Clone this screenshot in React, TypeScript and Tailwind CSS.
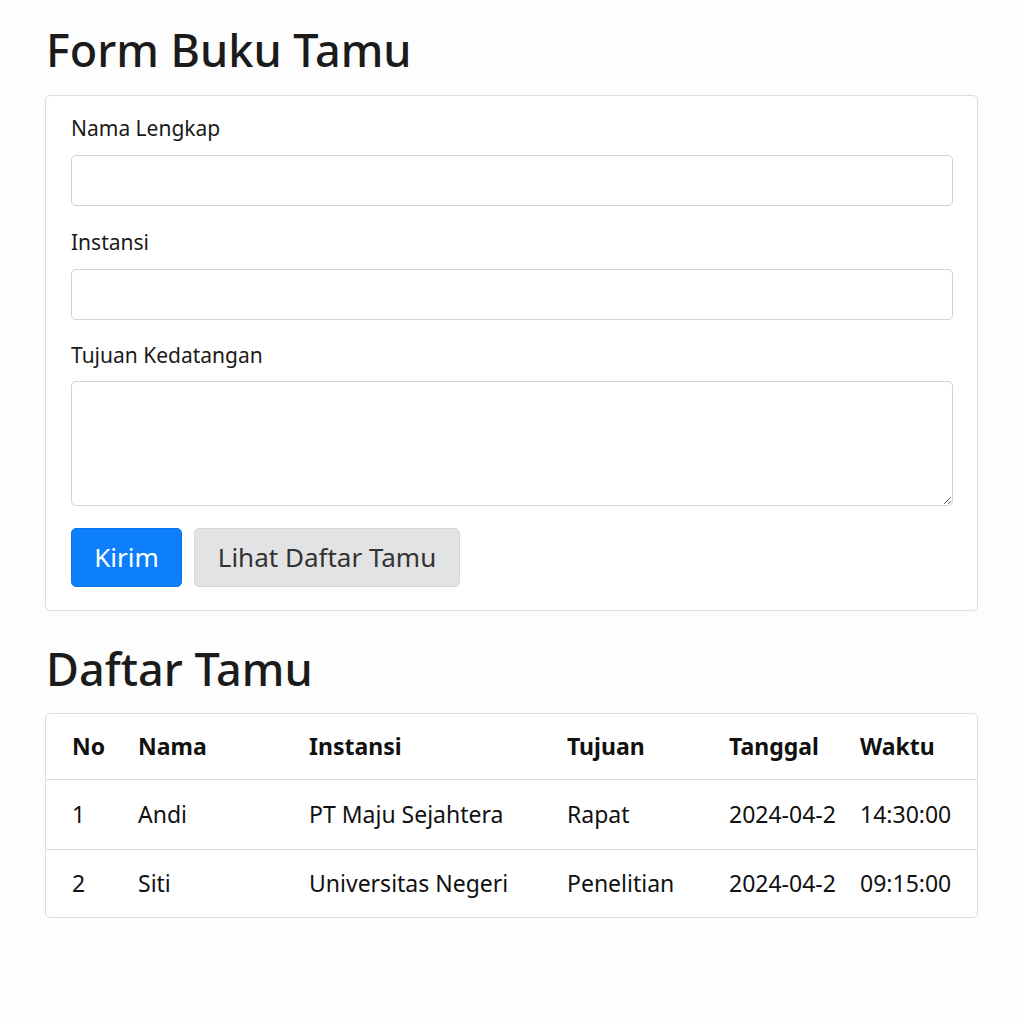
import React from "react";

const rows = [
  { no: "1", nama: "Andi", instansi: "PT Maju Sejahtera", tujuan: "Rapat", tanggal: "2024-04-2", waktu: "14:30:00" },
  { no: "2", nama: "Siti", instansi: "Universitas Negeri", tujuan: "Penelitian", tanggal: "2024-04-2", waktu: "09:15:00" },
];

const gridCols = "grid grid-cols-[66px_171px_258px_162px_131px_1fr] pl-[26px] items-center";

export default function App() {
  return (
    <div
      className="min-h-[1024px] bg-[#fdfdfd] text-[#212529]"
      style={{ fontFamily: '"Noto Sans", "Open Sans", sans-serif' }}
    >
      <div className="pl-[45px] pr-[46px] pt-[22px]">
        <h1 className="text-[45px] leading-[56px] font-medium text-[#1b1b1b] pl-[1px]">Form Buku Tamu</h1>
        <div className="mt-[17px] border border-[#dadde1] rounded-[5px] bg-white pl-[25px] pr-[24px] pt-[18px] pb-[23px]">
          <label className="block text-[21px] leading-[28px] text-[#1a1a1a]">Nama Lengkap</label>
          <input className="mt-[13px] block w-full h-[51px] border border-[#ced4da] rounded-[5px] bg-white" />
          <label className="block mt-[22px] text-[21px] leading-[28px] text-[#1a1a1a]">Instansi</label>
          <input className="mt-[13px] block w-full h-[51px] border border-[#ced4da] rounded-[5px] bg-white" />
          <label className="block mt-[21px] text-[21px] leading-[28px] text-[#1a1a1a]">Tujuan Kedatangan</label>
          <textarea className="mt-[12px] block w-full h-[125px] border border-[#ced4da] rounded-[5px] bg-white" />
          <div className="mt-[22px] flex gap-[12px]">
            <button className="h-[59px] w-[111px] rounded-[5px] bg-[#0d7ffc] text-white text-[26px] border border-[#0b76ec]">
              Kirim
            </button>
            <button className="h-[59px] w-[266px] rounded-[5px] bg-[#e2e3e5] text-[#333] text-[26px] border border-[#d3d5d8]">
              Lihat Daftar Tamu
            </button>
          </div>
        </div>

        <h2 className="mt-[30px] text-[45px] leading-[56px] font-medium text-[#1b1b1b] pl-[1px]">Daftar Tamu</h2>
        <div className="mt-[16px] border border-[#dadde1] rounded-[5px] bg-white">
          <div className={`${gridCols} h-[66px] font-bold text-[23px] text-[#111] border-b border-[#dadde1]`}>
            <div>No</div>
            <div>Nama</div>
            <div>Instansi</div>
            <div>Tujuan</div>
            <div>Tanggal</div>
            <div>Waktu</div>
          </div>
          {rows.map((r, i) => (
            <div
              key={r.no}
              className={`${gridCols} ${i === 0 ? "h-[70px] border-b border-[#dadde1]" : "h-[67px]"} text-[23px] text-[#111]`}
            >
              <div>{r.no}</div>
              <div>{r.nama}</div>
              <div className="whitespace-nowrap">{r.instansi}</div>
              <div>{r.tujuan}</div>
              <div className="whitespace-nowrap overflow-hidden">{r.tanggal}</div>
              <div>{r.waktu}</div>
            </div>
          ))}
        </div>
      </div>
    </div>
  );
}
